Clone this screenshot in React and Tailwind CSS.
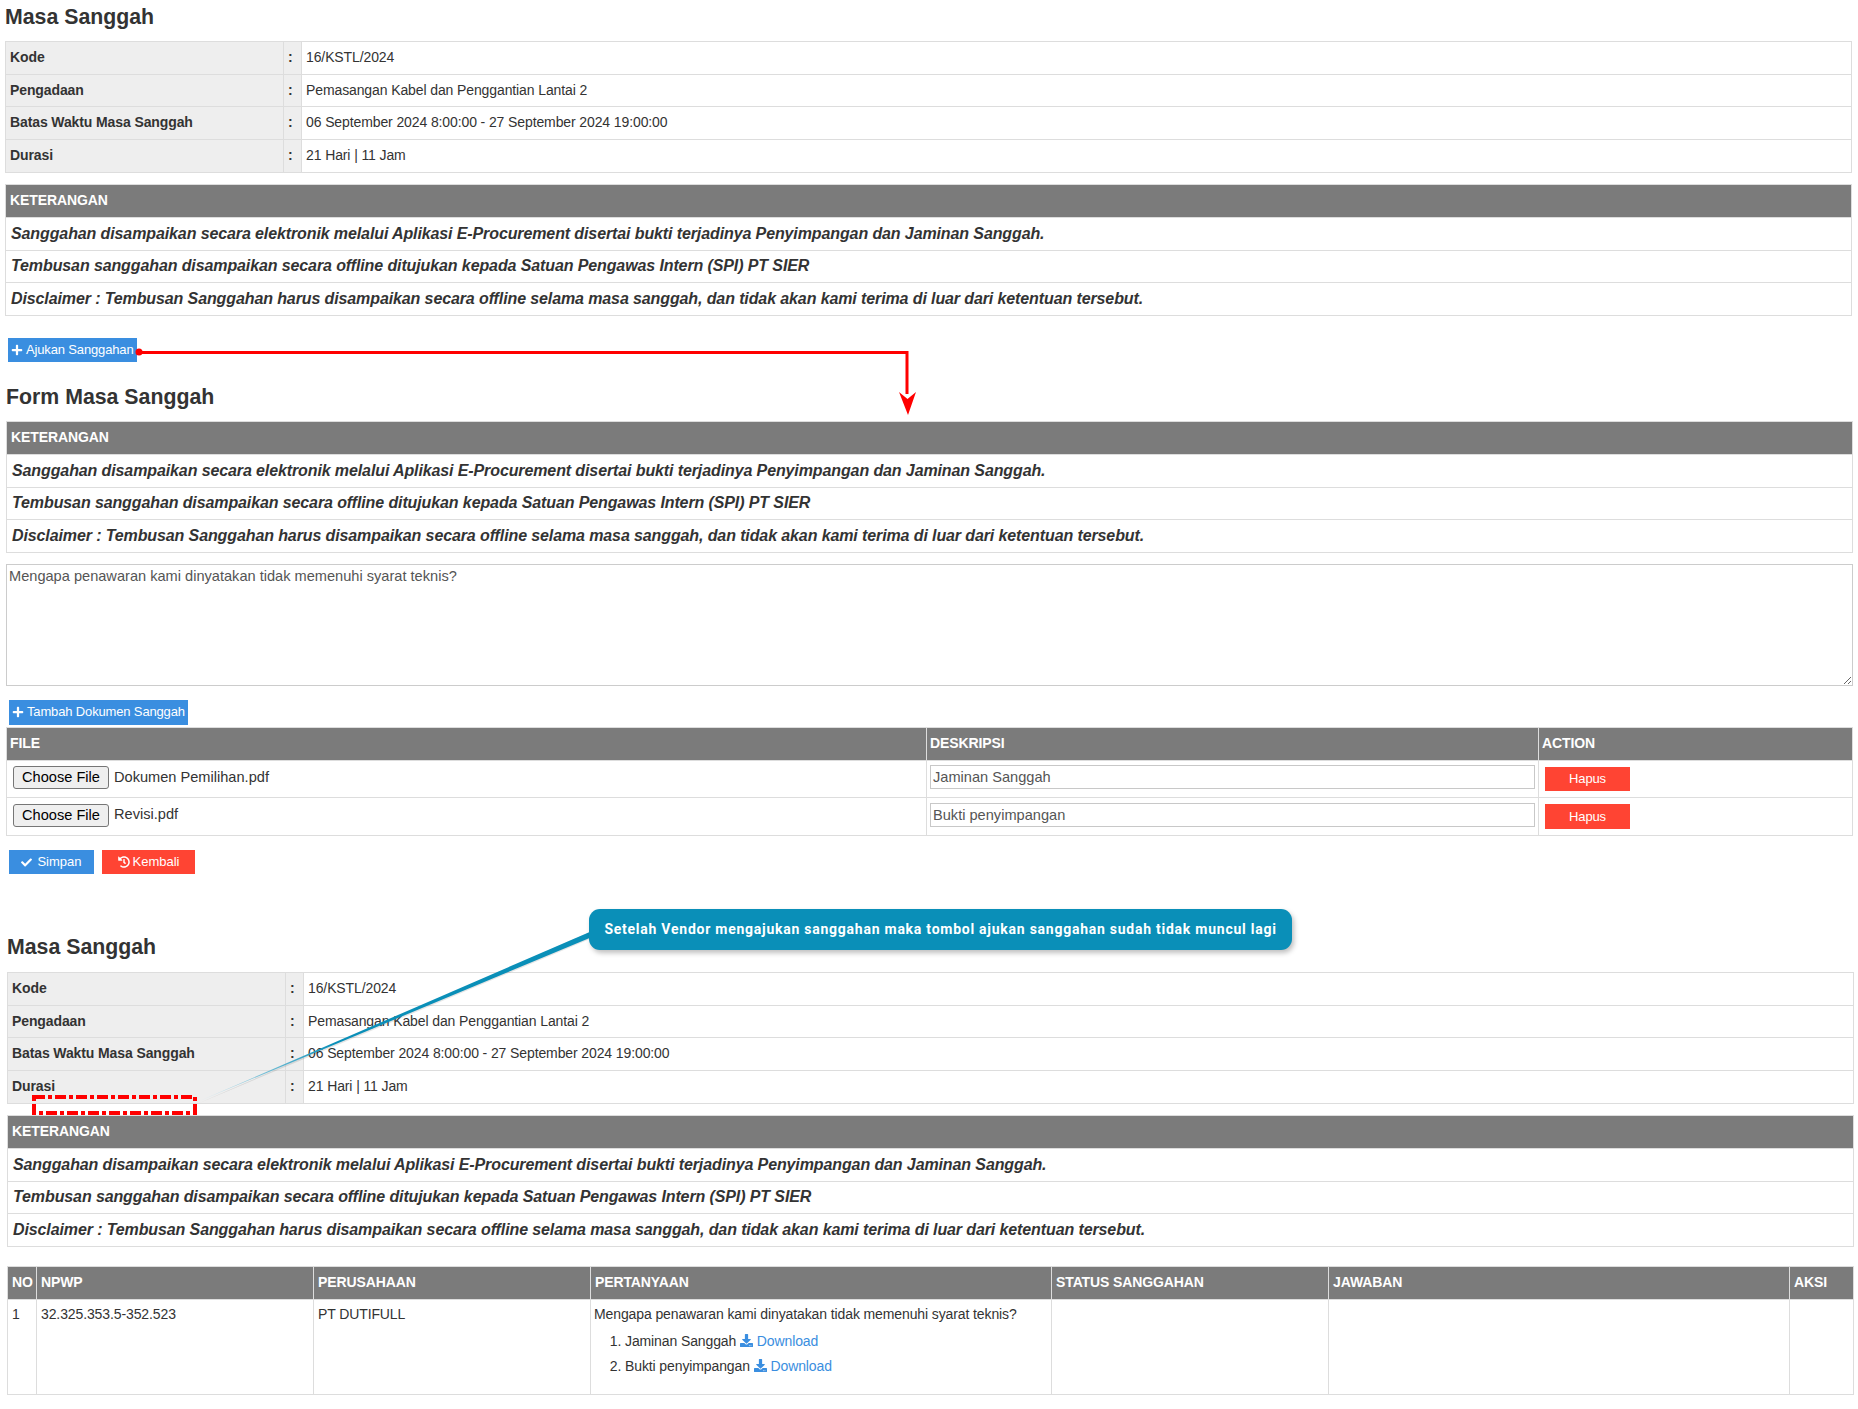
import React from 'react'
import { FaPlus, FaCheck, FaHistory, FaDownload } from 'react-icons/fa'

const infoRows = [
  ['Kode', '16/KSTL/2024', 'h-[33px]'],
  ['Pengadaan', 'Pemasangan Kabel dan Penggantian Lantai 2', 'h-[32px]'],
  ['Batas Waktu Masa Sanggah', '06 September 2024 8:00:00 - 27 September 2024 19:00:00', 'h-[33px]'],
  ['Durasi', '21 Hari | 11 Jam', 'h-[33px]'],
]

const notes = [
  ['Sanggahan disampaikan secara elektronik melalui Aplikasi E-Procurement disertai bukti terjadinya Penyimpangan dan Jaminan Sanggah.', 'h-[33px]'],
  ['Tembusan sanggahan disampaikan secara offline ditujukan kepada Satuan Pengawas Intern (SPI) PT SIER', 'h-[32px]'],
  ['Disclaimer : Tembusan Sanggahan harus disampaikan secara offline selama masa sanggah, dan tidak akan kami terima di luar dari ketentuan tersebut.', 'h-[33px]'],
]

const cell = 'border border-[#dddddd] px-[4px] pb-[1px] align-middle'
const head = 'border border-[#dddddd] bg-[#7b7b7b] px-[3px] pb-[1px] text-left font-bold text-white'

function InfoTable() {
  return (
    <table className="w-full table-fixed border-collapse">
      <colgroup>
        <col className="w-[278px]" />
        <col className="w-[18px]" />
        <col />
      </colgroup>
      <tbody>
        {infoRows.map(([label, value, h]) => (
          <tr key={label} className={h}>
            <td className={`${cell} bg-[#eeeeee] font-bold`}>{label}</td>
            <td className={`${cell} bg-[#eeeeee] font-bold`}>:</td>
            <td className={cell}>{value}</td>
          </tr>
        ))}
      </tbody>
    </table>
  )
}

function NotesTable() {
  return (
    <table className="w-full table-fixed border-collapse">
      <thead>
        <tr className="h-[33px]">
          <th className={`${head} px-[4px]`}>KETERANGAN</th>
        </tr>
      </thead>
      <tbody>
        {notes.map(([note, h]) => (
          <tr key={note} className={h}>
            <td className={`${cell} pl-[5px] text-[16px] font-bold italic`}>{note}</td>
          </tr>
        ))}
      </tbody>
    </table>
  )
}

function Heading({ children, className }) {
  return <h2 className={`flex items-center text-[21.3px] font-bold tracking-normal text-[#333333] ${className}`}>{children}</h2>
}

function FileRow({ name, desc, rowClass, btnClass }) {
  return (
    <tr className={rowClass}>
      <td className="border border-[#dddddd] px-[6px]">
        <div className="flex items-center gap-[5px] pb-[3px] text-[14.6px] tracking-normal">
          <button className="h-[23px] w-[96px] rounded-[3px] border border-[#767676] bg-[#efefef] text-center text-black">
            Choose File
          </button>
          <span>{name}</span>
        </div>
      </td>
      <td className="border border-[#dddddd] px-[3px]">
        <input
          readOnly
          value={desc}
          className="mb-[4px] block h-[24px] w-[605px] border border-[#c8c8c8] px-[2px] text-[14.6px] tracking-normal text-[#555555] outline-none"
        />
      </td>
      <td className="border border-[#dddddd] px-[6px]">
        <button className={`block w-[85px] bg-[#ff4433] text-[13px] text-white ${btnClass}`}>Hapus</button>
      </td>
    </tr>
  )
}

function Annotations() {
  return (
    <svg className="pointer-events-none absolute left-0 top-0" width="1858" height="1409">
      <defs>
        <linearGradient id="tail" x1="589" y1="934" x2="197" y2="1102" gradientUnits="userSpaceOnUse">
          <stop offset="0" stopColor="#0a8fb8" />
          <stop offset="0.65" stopColor="#0a8fb8" />
          <stop offset="1" stopColor="#dcecf2" />
        </linearGradient>
      </defs>
      <circle cx="139" cy="352" r="3.5" fill="#ff0000" />
      <path d="M139 352.5H907V394" fill="none" stroke="#ff0000" strokeWidth="3" />
      <path d="M899 392L907.5 399L916 392L908 415Z" fill="#ff0000" />
      <path d="M590 939L197 1104L590 932Z" fill="#000000" fillOpacity="0.1" />
      <path d="M592 931L197 1102L592 937Z" fill="url(#tail)" />
      <rect x="34" y="1097" width="161" height="16" fill="none" stroke="#ff0000" strokeWidth="4" strokeDasharray="11 3 4 3" />
    </svg>
  )
}

export default function App() {
  return (
    <div className="relative h-[1409px] w-full bg-white font-['Liberation_Sans',Arial,sans-serif] text-[14px] tracking-[-0.11px] text-[#333333]">
      {/* Detail masa sanggah */}
      <section className="ml-[5px] mr-[6px]">
        <Heading className="h-[41px] pb-[5px]">Masa Sanggah</Heading>
        <InfoTable />
        <div className="mt-[11px]">
          <NotesTable />
        </div>
        <button className="ml-[3px] mt-[22px] flex h-[24px] w-[129px] items-center gap-[3px] bg-[#3a8ee0] pl-[3px] text-[13px] tracking-[-0.15px] text-white">
          <FaPlus size={12} />
          Ajukan Sanggahan
        </button>
      </section>

      {/* Form */}
      <section className="ml-[6px] mr-[5px]">
        <Heading className="h-[59px] pt-[13px]">Form Masa Sanggah</Heading>
        <NotesTable />
        <textarea
          readOnly
          defaultValue="Mengapa penawaran kami dinyatakan tidak memenuhi syarat teknis?"
          className="mt-[11px] block h-[122px] w-full border border-[#cccccc] px-[2px] py-[1px] text-[14.6px] tracking-normal text-[#555555] outline-none"
        />
        <button className="ml-[3px] mt-[14px] flex h-[25px] w-[179px] items-center gap-[3px] bg-[#3a8ee0] pb-[1px] pl-[3px] text-[13px] tracking-[-0.15px] text-white">
          <FaPlus size={12} />
          Tambah Dokumen Sanggah
        </button>
        <table className="mt-[2px] w-full table-fixed border-collapse">
          <colgroup>
            <col className="w-[920px]" />
            <col className="w-[612px]" />
            <col />
          </colgroup>
          <thead>
            <tr className="h-[33px]">
              <th className={head}>FILE</th>
              <th className={head}>DESKRIPSI</th>
              <th className={head}>ACTION</th>
            </tr>
          </thead>
          <tbody>
            <FileRow name="Dokumen Pemilihan.pdf" desc="Jaminan Sanggah" rowClass="h-[37px]" btnClass="h-[24px]" />
            <FileRow name="Revisi.pdf" desc="Bukti penyimpangan" rowClass="h-[38px]" btnClass="h-[25px]" />
          </tbody>
        </table>
        <div className="ml-[3px] mt-[14px] flex gap-[8px] text-[13px] tracking-normal text-white">
          <button className="flex h-[24px] w-[85px] items-center justify-center gap-[5px] bg-[#3a8ee0]">
            <FaCheck size={11} />
            Simpan
          </button>
          <button className="flex h-[24px] w-[93px] items-center justify-center gap-[3px] bg-[#ff4433]">
            <FaHistory size={12} />
            Kembali
          </button>
        </div>
      </section>

      {/* Setelah sanggahan diajukan */}
      <section className="ml-[7px] mr-[4px]">
        <Heading className="h-[98px] pt-[50px]">Masa Sanggah</Heading>
        <InfoTable />
        <div className="mt-[11px]">
          <NotesTable />
        </div>
        <table className="mt-[19px] w-[1847px] table-fixed border-collapse">
          <colgroup>
            <col className="w-[29px]" />
            <col className="w-[277px]" />
            <col className="w-[277px]" />
            <col className="w-[461px]" />
            <col className="w-[277px]" />
            <col className="w-[461px]" />
            <col />
          </colgroup>
          <thead>
            <tr className="h-[33px]">
              {['NO', 'NPWP', 'PERUSAHAAN', 'PERTANYAAN', 'STATUS SANGGAHAN', 'JAWABAN', 'AKSI'].map((t) => (
                <th key={t} className={`${head} px-[4px]`}>{t}</th>
              ))}
            </tr>
          </thead>
          <tbody>
            <tr className="h-[95px] align-top">
              <td className="border border-[#dddddd] px-[4px] pt-[4px]">1</td>
              <td className="border border-[#dddddd] px-[4px] pt-[4px]">32.325.353.5-352.523</td>
              <td className="border border-[#dddddd] px-[4px] pt-[4px]">PT DUTIFULL</td>
              <td className="border border-[#dddddd] px-[3px] pt-[4px]">
                <p>Mengapa penawaran kami dinyatakan tidak memenuhi syarat teknis?</p>
                <ol className="ml-[31px] mt-[8px] list-decimal">
                  {['Jaminan Sanggah', 'Bukti penyimpangan'].map((doc) => (
                    <li key={doc} className="mb-[9px] leading-[16px]">
                      {doc}{' '}
                      <a href="#" className="text-[#3a8ee0]">
                        <FaDownload size={13} className="inline-block align-[-1px]" /> Download
                      </a>
                    </li>
                  ))}
                </ol>
              </td>
              <td className="border border-[#dddddd]"></td>
              <td className="border border-[#dddddd]"></td>
              <td className="border border-[#dddddd]"></td>
            </tr>
          </tbody>
        </table>
      </section>

      <Annotations />

      {/* Callout */}
      <div className="absolute left-[589px] top-[909px] flex h-[41px] w-[703px] items-center justify-center rounded-[11px] bg-[#0a8fb8] pb-[1px] font-['Roboto',sans-serif] text-[14px] font-bold tracking-[0.75px] text-white shadow-[2px_3px_5px_rgba(0,0,0,0.25)]">
        Setelah Vendor mengajukan sanggahan maka tombol ajukan sanggahan sudah tidak muncul lagi
      </div>
    </div>
  )
}
